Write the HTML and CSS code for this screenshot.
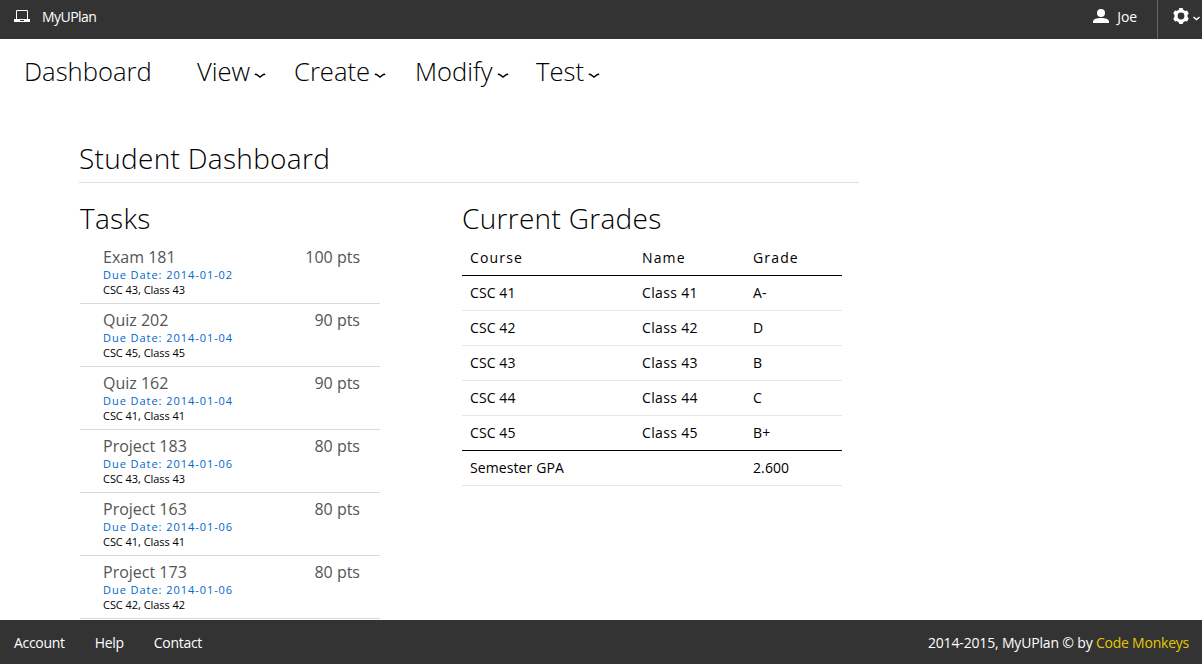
FILE: index.html
```
<!DOCTYPE html>
<html lang="en">
<head>
<meta charset="utf-8">
<title>MyUPlan</title>
<link rel="stylesheet" href="styles.css">
</head>
<body>
<header class="topbar">
  <a class="brand">
    <svg class="laptop" width="16" height="13" viewBox="0 0 16 13"><path d="M2.500 9V.5h11V9" fill="none" stroke="#fff"/><path d="M0 9h16v3H0z" fill="#fff"/><path d="M6 10.500h4" stroke="#333"/></svg>
    <span class="brand-name">MyUPlan</span>
  </a>
  <div class="account">
    <a class="user">
      <svg width="16" height="15" viewBox="0 0 16 15" fill="#fff"><circle cx="8" cy="4" r="4"/><path d="M0 14v-1.500C0 10 4 9 8 9s8 1 8 3.500V14z"/></svg>
      <span class="user-name">Joe</span>
    </a>
    <a class="settings">
      <svg class="gear" width="16" height="16" viewBox="0 0 16 16"><circle cx="8" cy="8" r="5" fill="none" stroke="#fff" stroke-width="3.200"/><g fill="#fff"><path id="tooth" d="M6.300 0h3.400l.8 3h-5z"/><use href="#tooth" transform="rotate(60 8 8)"/><use href="#tooth" transform="rotate(120 8 8)"/><use href="#tooth" transform="rotate(180 8 8)"/><use href="#tooth" transform="rotate(240 8 8)"/><use href="#tooth" transform="rotate(300 8 8)"/></g></svg>
      <svg class="gear-caret" width="7" height="5" viewBox="0 0 7 5"><path d="M.5 1L3.500 3.500 6.500 1" fill="none" stroke="#fff" stroke-width="1.500"/></svg>
    </a>
  </div>
</header>
<nav class="menu">
  <a class="item dash">Dashboard</a>
  <a class="item view">View<svg class="caret" width="12" height="6" viewBox="0 0 12 6"><path d="M.8 1.200L2.500 1.500 6 4 9.500 1.500 11.200 1.200"/></svg></a>
  <a class="item create">Create<svg class="caret" width="12" height="6" viewBox="0 0 12 6"><path d="M.8 1.200L2.500 1.500 6 4 9.500 1.500 11.200 1.200"/></svg></a>
  <a class="item modify">Modify<svg class="caret" width="12" height="6" viewBox="0 0 12 6"><path d="M.8 1.200L2.500 1.500 6 4 9.500 1.500 11.200 1.200"/></svg></a>
  <a class="item">Test<svg class="caret" width="12" height="6" viewBox="0 0 12 6"><path d="M.8 1.200L2.500 1.500 6 4 9.500 1.500 11.200 1.200"/></svg></a>
</nav>
<main class="page">
  <h1 class="title">Student Dashboard</h1>
  <div class="columns">
    <section class="tasks">
      <h2 class="heading">Tasks</h2>
      <div class="task"><div class="row"><span>Exam 181</span><span>100 pts</span></div><div class="due">Due Date: 2014-01-02</div><div class="course">CSC 43, Class 43</div></div>
      <div class="task"><div class="row"><span>Quiz 202</span><span>90 pts</span></div><div class="due">Due Date: 2014-01-04</div><div class="course">CSC 45, Class 45</div></div>
      <div class="task"><div class="row"><span>Quiz 162</span><span>90 pts</span></div><div class="due">Due Date: 2014-01-04</div><div class="course">CSC 41, Class 41</div></div>
      <div class="task"><div class="row"><span>Project 183</span><span>80 pts</span></div><div class="due">Due Date: 2014-01-06</div><div class="course">CSC 43, Class 43</div></div>
      <div class="task"><div class="row"><span>Project 163</span><span>80 pts</span></div><div class="due">Due Date: 2014-01-06</div><div class="course">CSC 41, Class 41</div></div>
      <div class="task"><div class="row"><span>Project 173</span><span>80 pts</span></div><div class="due">Due Date: 2014-01-06</div><div class="course">CSC 42, Class 42</div></div>
    </section>
    <section class="grades">
      <h2 class="heading">Current Grades</h2>
      <table class="table">
        <colgroup><col class="c1"><col class="c2"><col></colgroup>
        <thead><tr><th>Course</th><th>Name</th><th>Grade</th></tr></thead>
        <tbody>
          <tr><td>CSC 41</td><td class="name">Class 41</td><td>A-</td></tr>
          <tr><td>CSC 42</td><td class="name">Class 42</td><td>D</td></tr>
          <tr><td>CSC 43</td><td class="name">Class 43</td><td>B</td></tr>
          <tr><td>CSC 44</td><td class="name">Class 44</td><td>C</td></tr>
          <tr class="last"><td>CSC 45</td><td class="name">Class 45</td><td>B+</td></tr>
          <tr><td>Semester GPA</td><td></td><td>2.600</td></tr>
        </tbody>
      </table>
    </section>
  </div>
</main>
<footer class="footer">
  <div class="links"><a>Account</a><a>Help</a><a>Contact</a></div>
  <div class="credit">2014-2015, MyUPlan © by <a class="team">Code Monkeys</a></div>
</footer>
</body>
</html>
```
FILE: styles.css
```
* { box-sizing: border-box; }
body {
  margin: 0;
  height: 664px;
  overflow: hidden;
  display: flex;
  flex-direction: column;
  background: #fff;
  color: #000;
  font-family: "Open Sans", sans-serif;
}
svg { flex: none; }
.topbar {
  flex: none;
  height: 39px;
  display: flex;
  justify-content: space-between;
  background: #333;
  color: #fff;
  font-size: 14px;
  line-height: 34px;
}
.brand { display: flex; padding-left: 14px; gap: 12px; letter-spacing: -0.55px; }
.laptop { margin-top: 10px; }
.account { display: flex; }
.user { display: flex; gap: 8px; padding-right: 20px; letter-spacing: -0.1px; }
.user svg { margin-top: 9px; }
.settings { display: flex; width: 45px; padding-left: 15px; gap: 4px; border-left: 1px solid #666; }
.gear { margin-top: 8px; }
.gear-caret { margin-top: 16px; }
.menu {
  flex: none;
  height: 66px;
  display: flex;
  padding-left: 24px;
  font-size: 25.6px;
  font-weight: 300;
  line-height: 66px;
}
.item { display: flex; white-space: nowrap; }
.dash { width: 173px; }
.view { width: 97px; }
.create { width: 121px; }
.modify { width: 121px; }
.caret { margin: 34px 0 0 4px; fill: none; stroke: #000; stroke-width: 1.5; }
.page { flex: 1; min-height: 0; overflow: hidden; padding: 34px 0 0 79px; }
.title, .heading { margin: 0; font-size: 28px; font-weight: 300; line-height: 38px; letter-spacing: 0.3px; }
.title { width: 780px; height: 44px; border-bottom: 1px solid #e0e0e0; }
.columns { display: flex; padding: 16px 0 0 1px; gap: 82px; }
.tasks { width: 300px; }
.task { height: 63px; padding: 8px 20px 0 23px; border-bottom: 1px solid #d9d9d9; white-space: nowrap; }
.heading + .task { height: 66px; padding-top: 11px; }
.heading { height: 39px; }
.row { display: flex; justify-content: space-between; color: #555; font-size: 16px; line-height: 16px; }
.due { margin-top: 2px; color: #0067cb; font-size: 11px; line-height: 16px; letter-spacing: 0.95px; }
.course { font-size: 11px; line-height: 14px; letter-spacing: -0.05px; }
.grades { width: 380px; }
.table { width: 380px; table-layout: fixed; border-collapse: collapse; font-size: 14px; line-height: 18px; }
.c1 { width: 172px; }
.c2 { width: 111px; }
.table th { height: 37px; padding: 4px 8px 0; text-align: left; font-weight: 400; letter-spacing: 1.15px; border-bottom: 1px solid #000; }
.table td { height: 35px; padding: 0 8px; letter-spacing: 0.1px; border-bottom: 1px solid #e6e6e6; }
.table .name { letter-spacing: 0.35px; }
.table .last td { border-bottom-color: #000; }
.footer {
  flex: none;
  height: 44px;
  display: flex;
  justify-content: space-between;
  padding: 0 13px 0 14px;
  background: #333;
  color: #fff;
  font-size: 14px;
  line-height: 45px;
  letter-spacing: -0.3px;
}
.links { display: flex; gap: 30px; }
.credit { letter-spacing: -0.17px; }
.team { color: #e3c800; letter-spacing: -0.23px; }
```
